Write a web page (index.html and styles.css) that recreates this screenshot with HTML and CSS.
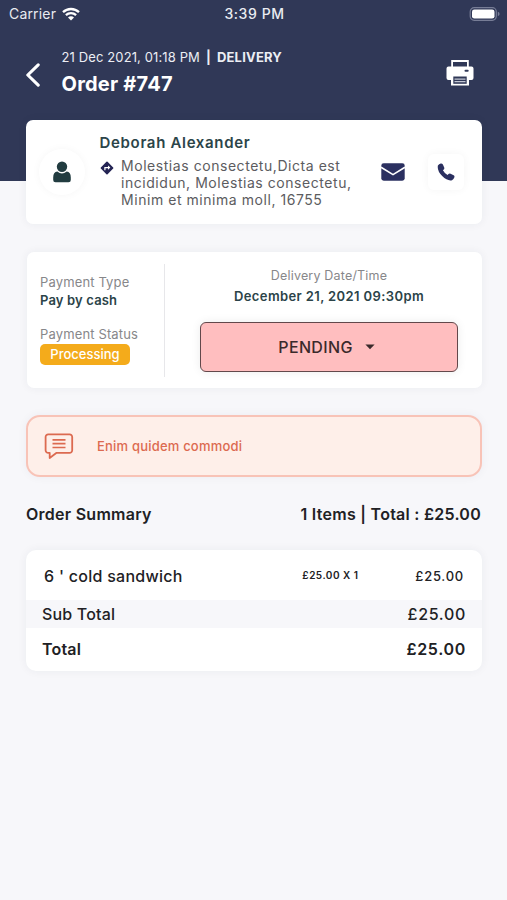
FILE: index.html
```html
<!DOCTYPE html>
<html lang="en">
<head>
<meta charset="utf-8">
<meta name="viewport" content="width=device-width, initial-scale=1">
<title>Order #747</title>
<link rel="stylesheet" href="styles.css">
</head>
<body>
<header class="header">
  <div class="status-bar">
    <div class="carrier"><span class="carrier-name">Carrier</span>
      <svg class="wifi" viewBox="0 0 18 14" width="18" height="14"><path d="M1 5.2a11.6 11.6 0 0 1 16 0M3.9 8.1a7.4 7.4 0 0 1 10.2 0" fill="none" stroke="#fff" stroke-width="2.3"/><path d="M9 13.4 6 10.4a4.2 4.2 0 0 1 6 0z" fill="#fff"/></svg>
    </div>
    <span class="clock">3:39 PM</span>
    <svg class="battery" viewBox="0 0 31 14" width="31" height="14"><rect x="1.2" y=".7" width="26.1" height="12.6" rx="4" fill="none" stroke="#777d96" stroke-width="1.2"/><rect x="3" y="2.4" width="22.5" height="9.2" rx="2.4" fill="#fff"/><path d="M28.8 4.8q1.8.6 1.8 2.2t-1.8 2.2z" fill="#777d96"/></svg>
  </div>
  <div class="title-bar">
    <svg class="back" viewBox="0 0 16 24" width="16" height="24"><path d="M13.2 1.8 2.8 12l10.400 10.200" fill="none" stroke="#fff" stroke-width="3.1" stroke-linecap="round" stroke-linejoin="round"/></svg>
    <div class="titles">
      <div class="meta"><span class="meta-date">21 Dec 2021, 01:18 PM</span><span class="meta-sep">|</span><b class="meta-kind">DELIVERY</b></div>
      <h1>Order #747</h1>
    </div>
    <svg class="printer" viewBox="0 0 28 26" width="28" height="26"><path d="M6.1 7V1h15.8v6" fill="none" stroke="#fff" stroke-width="1.8"/><path d="M2.5 6.600h23A2 2 0 0 1 27.500 8.600V18a2 2 0 0 1-2 2H23v5.500H5V20H2.500a2 2 0 0 1-2-2V8.600a2 2 0 0 1 2-2z" fill="#fff"/><path d="M7.300 16.500h13.400v7.300H7.300z" fill="#303857"/><path d="M8.500 18.400h11v1.300h-11zM8.500 21h11v1.300h-11z" fill="#c3c7d4"/><rect x="18.500" y="9.800" width="4.200" height="2" rx="1" fill="#303857"/></svg>
  </div>
</header>
<main>
  <section class="card customer">
    <div class="avatar"><svg viewBox="0 0 18 22" width="18" height="22"><circle cx="9" cy="5.700" r="5.200" fill="#223c40"/><path d="M4.300 10.600Q9 14.600 13.700 10.600Q17.800 11.200 17.800 16.500V19Q17.800 21.300 15.500 21.300H2.500Q.2 21.300.2 19V16.500Q.2 11.200 4.300 10.600z" fill="#223c40"/></svg></div>
    <div class="who">
      <h2>Deborah Alexander</h2>
      <div class="address">
        <svg viewBox="0 0 14 14" width="14" height="14"><path d="M7 1.400 12.600 7 7 12.600 1.400 7z" fill="#232353" stroke="#232353" stroke-width="1.600" stroke-linejoin="round"/><path d="M4.900 9.200V6.600H8.600" fill="none" stroke="#fff" stroke-width="1.200"/><path d="M8 4.500 10.400 6.600 8 8.700z" fill="#fff"/></svg>
        <p>Molestias consectetu,Dicta est<br>incididun, Molestias consectetu,<br>Minim et minima moll, 16755</p>
      </div>
    </div>
    <svg class="mail" viewBox="0 0 24 18" width="24" height="18"><rect x=".3" y=".3" width="23.400" height="17.400" rx="2.400" fill="#2b3060"/><path d="M0 4.200 12 11.600 24 4.200" fill="none" stroke="#fff" stroke-width="1.700"/></svg>
    <div class="call"><svg viewBox="0 0 18 18" width="18" height="18"><path d="M.9 2.600Q2 .9 3.700.5Q5.200.3 5.900 1.600L7.200 4.500Q7.600 5.600 6.800 6.400L5.900 7.300Q7.300 10.100 10.500 11.900L11.500 11Q12.500 10.300 13.600 10.800L16.600 12.300Q17.800 13 17.400 14.300Q16.700 16.300 15 17.200Q10.500 18.300 5.200 13.100Q-.1 7.600.9 2.600z" fill="#2b3060"/></svg></div>
  </section>

  <section class="card payment">
    <div class="pay-info">
      <div class="label">Payment Type</div>
      <div class="value">Pay by cash</div>
      <div class="label second">Payment Status</div>
      <span class="badge">Processing</span>
    </div>
    <div class="delivery">
      <div class="label date-label">Delivery Date/Time</div>
      <div class="value date">December 21, 2021 09:30pm</div>
      <button class="state" type="button">PENDING<svg viewBox="0 0 10 6" width="10" height="6"><path d="M.4.500h9.200L5 5.300z" fill="#3a2a2b"/></svg></button>
    </div>
  </section>

  <section class="note">
    <svg viewBox="0 0 30 27" width="30" height="27"><path d="M4.200 1.300H25.600A2.600 2.600 0 0 1 28.200 3.900V17.200A2.600 2.600 0 0 1 25.600 19.800H12.600L5.700 25V19.800H4.200A2.600 2.600 0 0 1 1.600 17.200V3.900A2.600 2.600 0 0 1 4.200 1.300z" fill="none" stroke="#dc6a50" stroke-width="1.800" stroke-linejoin="round"/><path d="M8.500 6.900h13M8.500 10.700h13M8.500 14.500h13" stroke="#dc6a50" stroke-width="1.700"/></svg>
    <span>Enim quidem commodi</span>
  </section>

  <div class="summary"><span>Order Summary</span><span>1 Items | Total : £25.00</span></div>

  <section class="card items">
    <div class="row item"><span class="name">6 ' cold sandwich</span><span class="qty">£25.00 X 1</span><span class="price">£25.00</span></div>
    <div class="row sub"><span>Sub Total</span><span class="amount">£25.00</span></div>
    <div class="row grand"><span>Total</span><span class="amount">£25.00</span></div>
  </section>
</main>
</body>
</html>
```
FILE: styles.css
```css
* { box-sizing: border-box; }
body { margin: 0; min-height: 900px; background: #f7f7fa; font-family: Inter, "Liberation Sans", sans-serif; color: #212124; }
h1, h2, p { margin: 0; }
svg { display: block; flex: none; }
.header { height: 181px; background: #303857; color: #fff; }
.status-bar { display: grid; grid-template-columns: 1fr auto 1fr; align-items: center; height: 27px; padding: 0 7px 0 9px; font-size: 14px; line-height: 18px; color: #e9ebf1; }
.carrier { display: flex; align-items: center; gap: 6px; letter-spacing: .17px; }
.clock { font-weight: 500; letter-spacing: .57px; }
.battery { justify-self: end; }
.title-bar { display: flex; padding: 22px 33px 0 25px; }
.back { margin-top: 14px; }
.titles { margin-left: 20.5px; flex: 1; }
.meta { display: flex; font-size: 13px; line-height: 17px; letter-spacing: .12px; color: #eceef4; }
.meta-sep { margin: 0 6px; font-weight: 700; }
.meta-kind { letter-spacing: .2px; }
h1 { margin-top: 5px; font-size: 20px; line-height: 26px; font-weight: 700; letter-spacing: .22px; }
.printer { margin-top: 11px; }
main { display: flex; flex-direction: column; margin: -61px 25px 0 26px; }
.card { background: #fff; border-radius: 7px; box-shadow: 0 0 10px rgba(40, 44, 70, .06); }
.customer { display: flex; height: 104px; }
.avatar { display: grid; place-items: center; width: 46px; height: 46px; margin: 29px 0 0 13px; border-radius: 50%; box-shadow: 0 0 9px rgba(0, 0, 0, .04); }
.who { width: 281px; margin: 13px 0 0 14px; }
h2 { margin-left: .5px; font-size: 15px; line-height: 20px; font-weight: 600; letter-spacing: .67px; color: #2c4549; }
.address { display: flex; gap: 7px; margin-top: 4px; }
.address svg { margin: 4px 0 0 1px; }
.address p { font-size: 14px; line-height: 17px; letter-spacing: .55px; color: #5c5c60; white-space: nowrap; }
.mail { margin: 43px 0 0 .5px; }
.call { display: grid; place-items: center; width: 36px; height: 36px; margin: 34px 0 0 23.5px; border-radius: 6px; box-shadow: 0 0 8px rgba(0, 0, 0, .045); }
.payment { display: flex; height: 136px; margin: 28px 0 0 1px; padding: 12px 0 11px 13px; }
.pay-info { width: 125px; border-right: 1px solid #e7e7ea; padding-top: 9px; }
.label { font-size: 13px; line-height: 18px; letter-spacing: .14px; color: #87878a; }
.value { font-size: 13px; line-height: 18px; font-weight: 600; letter-spacing: .15px; color: #2b4348; }
.second { margin-top: 16px; }
.badge { display: flex; align-items: center; justify-content: center; width: 90px; height: 21px; margin-top: 1px; padding-bottom: 1px; border-radius: 5px; background: #f4ab1b; color: #fff; font-size: 13px; font-weight: 500; }
.delivery { flex: 1; display: flex; flex-direction: column; align-items: center; padding: 3px 0 0 11px; }
.date-label { font-size: 12.5px; letter-spacing: .19px; }
.date { margin-top: 2px; letter-spacing: .39px; }
.state { display: flex; align-items: center; justify-content: center; gap: 12px; width: 258px; height: 50px; margin-top: 17px; padding: 0 5px 0 0; border: 1.500px solid #62484b; border-radius: 6px; background: #ffbebf; box-shadow: 0 0 10px rgba(0, 0, 0, .08); color: #3a2a2b; font: 500 16px/20px Inter, sans-serif; letter-spacing: .35px; }
.note { display: flex; align-items: center; gap: 23px; height: 62px; margin-top: 27px; padding-left: 16px; border: 2px solid #f8c3b7; border-radius: 14px; background: #feefe9; box-shadow: 0 0 10px rgba(40, 44, 70, .05); color: #dc6a50; font-size: 13px; font-weight: 500; letter-spacing: .2px; }
.note span { padding-bottom: 1px; }
.summary { display: flex; justify-content: space-between; margin: 27px 1px 0 0; font-size: 16px; line-height: 20px; font-weight: 600; letter-spacing: .26px; }
.items { height: 121px; margin-top: 26px; border-radius: 10px; overflow: hidden; }
.row { display: flex; align-items: center; justify-content: space-between; padding: 0 16px; font-size: 16px; font-weight: 500; letter-spacing: .18px; }
.item { height: 50px; padding: 1px 18px 0 18px; letter-spacing: .27px; }
.name { flex: 1; }
.qty { width: 113px; padding-bottom: 2px; font-size: 10px; font-weight: 600; letter-spacing: .5px; }
.price { font-size: 13px; letter-spacing: .75px; }
.amount { letter-spacing: .68px; }
.sub { height: 28px; background: #f7f7fa; }
.grand { height: 43px; padding-bottom: 1px; font-weight: 600; }
```
